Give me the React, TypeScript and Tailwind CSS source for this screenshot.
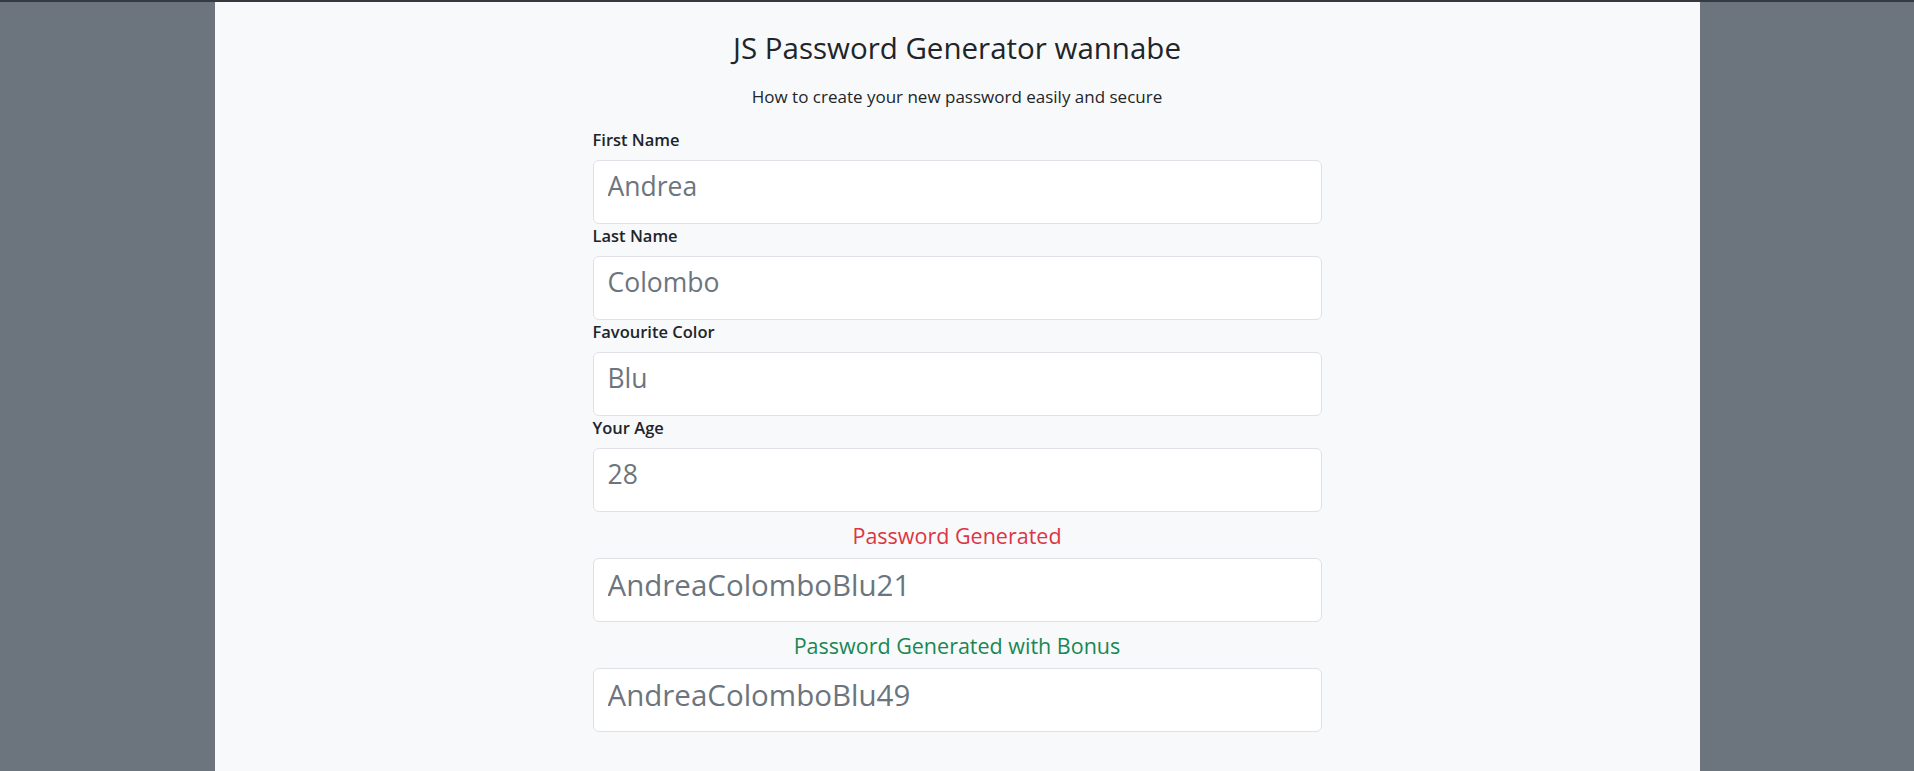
import React from "react";

const fields = [
  { label: "First Name", value: "Andrea" },
  { label: "Last Name", value: "Colombo" },
  { label: "Favourite Color", value: "Blu" },
  { label: "Your Age", value: "28" },
];

function Box({ value, big }: { value: string; big?: boolean }) {
  return (
    <input
      readOnly
      value={value}
      className={
        "block w-full h-[64px] rounded-[6px] border border-[#dee2e6] bg-white px-[14px] pb-[12px] pt-0 text-[#6c757d] outline-none " +
        (big ? "text-[29.5px]" : "text-[26.5px]")
      }
      style={{ fontFamily: '"Open Sans", sans-serif' }}
    />
  );
}

export default function App() {
  return (
    <div
      className="min-h-screen flex flex-col bg-[#6c757d] text-[#212529]"
      style={{ fontFamily: '"Open Sans", sans-serif' }}
    >
      <div className="h-[2px] bg-[#343a40]" />
      <div className="flex-1 flex justify-center">
        <main className="w-[1485px] bg-[#f8f9fa] flex flex-col items-center pt-[27px] pb-[36px]">
          <h1 className="text-[29.5px] leading-[38px] font-normal">JS Password Generator wannabe</h1>
          <p className="mt-[18px] text-[17px] leading-[24px]">How to create your new password easily and secure</p>
          <div className="w-[729px] mt-[19px]">
            {fields.map((f) => (
              <div key={f.label}>
                <label className="block text-[16.5px] leading-[24px] font-semibold mb-[8px]">{f.label}</label>
                <Box value={f.value} />
              </div>
            ))}
            <h5 className="text-center text-[21.5px] leading-[30px] font-medium text-[#dc3545] mt-[9px] mb-[7px]">Password Generated</h5>
            <Box value="AndreaColomboBlu21" big />
            <h5 className="text-center text-[21.5px] leading-[30px] font-medium text-[#198754] mt-[9px] mb-[7px]">Password Generated with Bonus</h5>
            <Box value="AndreaColomboBlu49" big />
          </div>
        </main>
      </div>
    </div>
  );
}
